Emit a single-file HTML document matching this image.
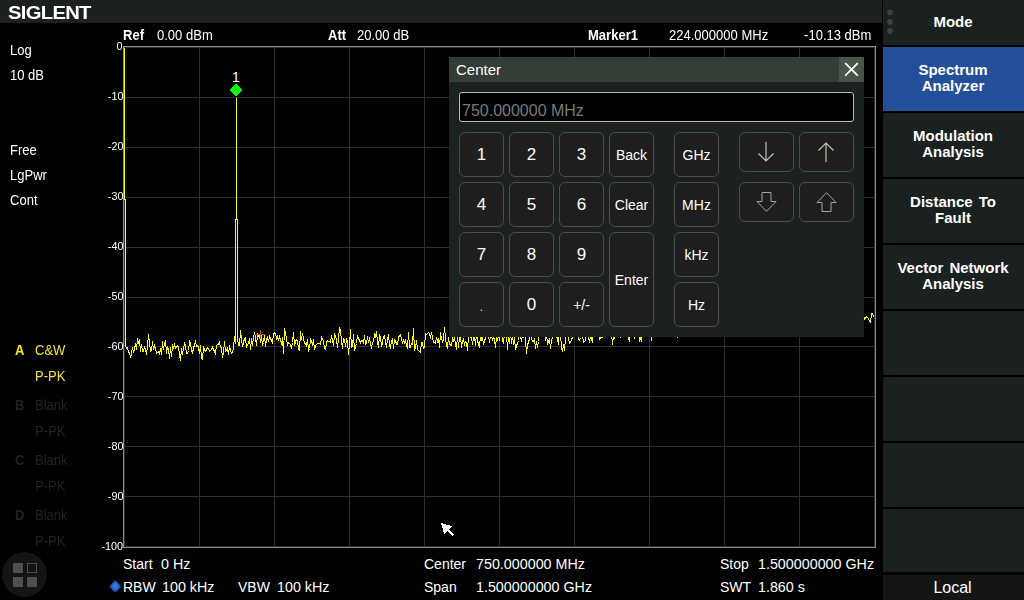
<!DOCTYPE html>
<html><head><meta charset="utf-8"><title>Siglent</title>
<style>
*{box-sizing:border-box;margin:0;padding:0}
html,body{width:1024px;height:600px;background:#000;overflow:hidden}
body{position:relative;font-family:"Liberation Sans",Arial,sans-serif;color:#fff;font-size:13px}
.abs{position:absolute;white-space:nowrap}
.t{position:absolute;white-space:nowrap;line-height:16px;height:16px}
.b{font-weight:bold}
.h{font-size:14px;transform:scaleX(0.93);transform-origin:0 50%}
.hr{transform-origin:100% 50%}
.bt{font-size:14px}
.bv{font-size:14.3px}
#top{left:0;top:0;width:882px;height:23px;background:#1b2121}
#logo{left:8px;top:2px;font-weight:bold;font-size:17.5px;line-height:22px;letter-spacing:-0.6px;transform-origin:0 50%;transform:scaleX(1.155)}
.yl{position:absolute;right:901px;font-size:10px;line-height:12px;height:12px;white-space:nowrap;transform:scaleX(1.08);transform-origin:100% 50%}
.dim{color:#212121}
.yel{color:#f5e32a}
/* right panel */
#rp{left:883px;top:0;width:141px;height:600px}
.mb{position:absolute;left:0;width:141px;height:64px;background:#1b2121;display:flex;align-items:center;justify-content:center;text-align:center;font-weight:bold;font-size:15px;line-height:16px;padding:0 1px 2px 0;word-spacing:2px}
.mb.sel{background:#24509a}
/* dialog */
#dlg{left:449px;top:57px;width:415px;height:280px;background:#1b2121}
#dt{left:0;top:0;width:415px;height:25px;background:#343d36}
#dx{left:390px;top:0;width:25px;height:25px;background:#485448}
#inp{left:10px;top:35px;width:395px;height:30px;background:#000;border:1px solid #bbb;border-radius:3px;color:#7a7a7a;font-size:16px;line-height:36px;padding-left:2px}
.k{position:absolute;width:45px;height:45px;background:#1e1e1e;border:1px solid #4c4c4c;border-radius:6px;display:flex;align-items:center;justify-content:center;font-size:17px;color:#fff}
.k.s{font-size:14px}
.k.a{width:55px;height:40px}
</style></head><body>
<div class="abs" id="top"></div>
<div class="abs" id="logo">SIGLENT</div>

<!-- header -->
<div class="t b h" style="left:123px;top:27px">Ref</div>
<div class="t h" style="left:157px;top:27px">0.00 dBm</div>
<div class="t b h" style="left:328px;top:27px">Att</div>
<div class="t h" style="left:357px;top:27px">20.00 dB</div>
<div class="t b h" style="left:588px;top:27px">Marker1</div>
<div class="t h" style="left:669px;top:27px">224.000000 MHz</div>
<div class="t h hr" style="right:153px;top:27px">-10.13 dBm</div>

<!-- left labels -->
<div class="t h" style="left:10px;top:42px">Log</div>
<div class="t h" style="left:10px;top:67px">10 dB</div>
<div class="t h" style="left:10px;top:142px">Free</div>
<div class="t h" style="left:10px;top:167px">LgPwr</div>
<div class="t h" style="left:10px;top:192px">Cont</div>

<!-- trace legend -->
<div class="t b yel h" style="left:15px;top:342px">A</div>
<div class="t yel h" style="left:35px;top:342px">C&amp;W</div>
<div class="t yel h" style="left:35px;top:368px">P-PK</div>
<div class="t b dim h" style="left:15px;top:397px">B</div>
<div class="t dim h" style="left:35px;top:397px">Blank</div>
<div class="t dim h" style="left:35px;top:423px">P-PK</div>
<div class="t b dim h" style="left:15px;top:452px">C</div>
<div class="t dim h" style="left:35px;top:452px">Blank</div>
<div class="t dim h" style="left:35px;top:478px">P-PK</div>
<div class="t b dim h" style="left:15px;top:507px">D</div>
<div class="t dim h" style="left:35px;top:507px">Blank</div>
<div class="t dim h" style="left:35px;top:533px">P-PK</div>

<!-- y labels -->
<div class="yl" style="top:41px">0</div>
<div class="yl" style="top:91px">-10</div>
<div class="yl" style="top:141px">-20</div>
<div class="yl" style="top:191px">-30</div>
<div class="yl" style="top:241px">-40</div>
<div class="yl" style="top:291px">-50</div>
<div class="yl" style="top:341px">-60</div>
<div class="yl" style="top:391px">-70</div>
<div class="yl" style="top:441px">-80</div>
<div class="yl" style="top:491px">-90</div>
<div class="yl" style="top:541px">-100</div>

<!-- grid + trace -->
<svg class="abs" style="left:0;top:0" width="883" height="600" viewBox="0 0 883 600" shape-rendering="crispEdges">
<g fill="#2e2e2e">
<rect x="124" y="47" width="1" height="500"/>
<rect x="199" y="47" width="1" height="500"/>
<rect x="274" y="47" width="1" height="500"/>
<rect x="349" y="47" width="1" height="500"/>
<rect x="424" y="47" width="1" height="500"/>
<rect x="499" y="47" width="1" height="500"/>
<rect x="574" y="47" width="1" height="500"/>
<rect x="649" y="47" width="1" height="500"/>
<rect x="724" y="47" width="1" height="500"/>
<rect x="799" y="47" width="1" height="500"/>
<rect x="874" y="47" width="1" height="500"/>
<rect x="124" y="47" width="751" height="1"/>
<rect x="124" y="97" width="751" height="1"/>
<rect x="124" y="147" width="751" height="1"/>
<rect x="124" y="197" width="751" height="1"/>
<rect x="124" y="247" width="751" height="1"/>
<rect x="124" y="297" width="751" height="1"/>
<rect x="124" y="346" width="751" height="1"/>
<rect x="124" y="396" width="751" height="1"/>
<rect x="124" y="446" width="751" height="1"/>
<rect x="124" y="496" width="751" height="1"/>
<rect x="124" y="546" width="751" height="1"/>
</g>
<rect x="123.5" y="46.5" width="752" height="501" fill="none" stroke="#8c8c8c" stroke-width="1"/>
<g fill="none" stroke="#ffff00" stroke-width="1" stroke-linejoin="miter"><polyline points="124.5,47.5 124.5,199.5 125.5,199.5 125.5,345.5 126.5,348.5 127.5,347.5 128.5,352.5 129.5,352.5 130.5,357.5 131.5,353.5 132.5,347.5 133.5,352.5 134.5,348.5 135.5,343.5 136.5,349.5 137.5,338.5 138.5,343.5 139.5,339.5 140.5,351.5 141.5,344.5 142.5,351.5 143.5,351.5 144.5,347.5 145.5,349.5 146.5,354.5 147.5,345.5 148.5,334.5 149.5,342.5 150.5,351.5 151.5,350.5 152.5,341.5 153.5,349.5 154.5,345.5 155.5,348.5 156.5,353.5 157.5,352.5 158.5,351.5 159.5,354.5 160.5,348.5 161.5,354.5 162.5,341.5 163.5,349.5 164.5,343.5 165.5,340.5 166.5,353.5 167.5,347.5 168.5,349.5 169.5,358.5 170.5,347.5 171.5,356.5 172.5,345.5 173.5,347.5 174.5,344.5 175.5,348.5 176.5,347.5 177.5,345.5 178.5,346.5 179.5,354.5 180.5,360.5 181.5,348.5 182.5,354.5 183.5,348.5 184.5,343.5 185.5,345.5 186.5,353.5 187.5,353.5 188.5,350.5 189.5,341.5 190.5,343.5 191.5,350.5 192.5,352.5 193.5,348.5 194.5,344.5 195.5,341.5 196.5,346.5 197.5,345.5 198.5,347.5 199.5,353.5 200.5,345.5 201.5,358.5 202.5,359.5 203.5,346.5 204.5,350.5 205.5,351.5 206.5,349.5 207.5,347.5 208.5,348.5 209.5,351.5 210.5,350.5 211.5,349.5 212.5,347.5 213.5,349.5 214.5,351.5 215.5,353.5 216.5,345.5 217.5,344.5 218.5,344.5 219.5,342.5 220.5,347.5 221.5,347.5 222.5,357.5 223.5,352.5 224.5,341.5 225.5,351.5 226.5,350.5 227.5,348.5 228.5,354.5 229.5,345.5 230.5,350.5 231.5,353.5 232.5,352.5 233.5,348.5 234.5,336.5 235.5,343.5 235.5,219.5 236.5,219.5 236.5,97.5 236.500,219.500 237.5,219.5 237.5,338.5 238.5,345.5 239.5,345.5 240.5,330.5 241.5,339.5 242.5,346.5 243.5,342.5 244.5,338.5 245.5,337.5 246.5,347.5 247.5,344.5 248.5,343.5 249.5,338.5 250.5,349.5 251.5,338.5 252.5,345.5 253.5,337.5 254.5,332.5 255.5,337.5 256.5,345.5 257.5,334.5 258.5,336.5 259.5,335.5 260.5,342.5 261.5,335.5 262.5,345.5 263.5,342.5 264.5,334.5 265.5,346.5 266.5,339.5 267.5,337.5 268.5,341.5 269.5,336.5 270.5,338.5 271.5,340.5 272.5,342.5 273.5,334.5 274.5,332.5 275.5,333.5 276.5,338.5 277.5,336.5 278.5,340.5 279.5,336.5 280.5,339.5 281.5,344.5 282.5,337.5 283.5,353.5 284.5,328.5 285.5,333.5 286.5,338.5 287.5,345.5 288.5,342.5 289.5,343.5 290.5,344.5 291.5,348.5 292.5,342.5 293.5,332.5 294.5,345.5 295.5,341.5 296.5,339.5 297.5,340.5 298.5,349.5 299.5,350.5 300.5,331.5 301.5,339.5 302.5,333.5 303.5,338.5 304.5,343.5 305.5,343.5 306.5,345.5 307.5,339.5 308.5,350.5 309.5,348.5 310.5,339.5 311.5,341.5 312.5,344.5 313.5,339.5 314.5,349.5 315.5,345.5 316.5,344.5 317.5,343.5 318.5,343.5 319.5,343.5 320.5,344.5 321.5,337.5 322.5,339.5 323.5,340.5 324.5,348.5 325.5,349.5 326.5,342.5 327.5,340.5 328.5,341.5 329.5,341.5 330.5,342.5 331.5,335.5 332.5,339.5 333.5,345.5 334.5,334.5 335.5,336.5 336.5,339.5 337.5,347.5 338.5,338.5 339.5,327.5 340.5,330.5 341.5,340.5 342.5,348.5 343.5,338.5 344.5,339.5 345.5,346.5 346.5,339.5 347.5,341.5 348.5,354.5 349.5,344.5 350.5,329.5 351.5,347.5 352.5,346.5 353.5,334.5 354.5,350.5 355.5,346.5 356.5,343.5 357.5,335.5 358.5,338.5 359.5,340.5 360.5,342.5 361.5,340.5 362.5,340.5 363.5,342.5 364.5,335.5 365.5,344.5 366.5,343.5 367.5,336.5 368.5,342.5 369.5,337.5 370.5,344.5 371.5,347.5 372.5,342.5 373.5,341.5 374.5,334.5 375.5,336.5 376.5,331.5 377.5,342.5 378.5,347.5 379.5,334.5 380.5,337.5 381.5,346.5 382.5,342.5 383.5,336.5 384.5,335.5 385.5,342.5 386.5,347.5 387.5,339.5 388.5,334.5 389.5,345.5 390.5,347.5 391.5,341.5 392.5,339.5 393.5,348.5 394.5,339.5 395.5,340.5 396.5,344.5 397.5,344.5 398.5,337.5 399.5,335.5 400.5,334.5 401.5,339.5 402.5,342.5 403.5,340.5 404.5,342.5 405.5,340.5 406.5,345.5 407.5,348.5 408.5,332.5 409.5,347.5 410.5,347.5 411.5,343.5 412.5,344.5 413.5,328.5 414.5,350.5 415.5,347.5 416.5,340.5 417.5,349.5 418.5,350.5 419.5,351.5 420.5,352.5 421.5,342.5 422.5,342.5 423.5,348.5 424.5,347.5 425.5,333.5 426.5,334.5 427.5,333.5 428.5,332.5 429.5,333.5 430.5,338.5 431.5,332.5 432.5,337.5 433.5,342.5 434.5,342.5 435.5,343.5 436.5,337.5 437.5,341.5 438.5,338.5 439.5,347.5 440.5,332.5 441.5,338.5 442.5,341.5 443.5,339.5 444.5,327.5 445.5,338.5 446.5,345.5 447.5,347.5 448.5,337.5 449.5,343.5 450.5,345.5 451.5,345.5 452.5,338.5 453.5,340.5 454.5,338.5 455.5,343.5 456.5,349.5 457.5,335.5 458.5,347.5 459.5,336.5 460.5,335.5 461.5,347.5 462.5,341.5 463.5,339.5 464.5,344.5 465.5,341.5 466.5,342.5 467.5,350.5 468.5,336.5 469.5,330.5 470.5,337.5 471.5,336.5 472.5,344.5 473.5,337.5 474.5,336.5 475.5,345.5 476.5,333.5 477.5,340.5 478.5,344.5 479.5,346.5 480.5,335.5 481.5,339.5 482.5,337.5 483.5,344.5 484.5,340.5 485.5,338.5 486.5,331.5 487.5,332.5 488.5,334.5 489.5,342.5 490.5,336.5 491.5,336.5 492.5,339.5 493.5,337.5 494.5,339.5 495.5,347.5 496.5,337.5 497.5,339.5 498.5,336.5 499.5,339.5 500.5,334.5 501.5,332.5 502.5,340.5 503.5,342.5 504.5,334.5 505.5,331.5 506.5,333.5 507.5,349.5 508.5,334.5 509.5,343.5 510.5,332.5 511.5,343.5 512.5,335.5 513.5,344.5 514.5,337.5 515.5,349.5 516.5,345.5 517.5,343.5 518.5,340.5 519.5,332.5 520.5,335.5 521.5,341.5 522.5,334.5 523.5,336.5 524.5,333.5 525.5,339.5 526.5,353.5 527.5,345.5 528.5,341.5 529.5,339.5 530.5,334.5 531.5,338.5 532.5,341.5 533.5,341.5 534.5,339.5 535.5,348.5 536.5,341.5 537.5,347.5 538.5,341.5 539.5,332.5 540.5,335.5 541.5,336.5 542.5,332.5 543.5,331.5 544.5,321.5 545.5,340.5 546.5,334.5 547.5,343.5 548.5,341.5 549.5,339.5 550.5,348.5 551.5,340.5 552.5,337.5 553.5,330.5 554.5,329.5 555.5,329.5 556.5,335.5 557.5,339.5 558.5,344.5 559.5,327.5 560.5,333.5 561.5,347.5 562.5,351.5 563.5,344.5 564.5,350.5 565.5,337.5 566.5,329.5 567.5,334.5 568.5,338.5 569.5,343.5 570.5,342.5 571.5,339.5 572.5,337.5 573.5,325.5 574.5,334.5 575.5,328.5 576.5,330.5 577.5,331.5 578.5,339.5 579.5,340.5 580.5,337.5 581.5,328.5 582.5,334.5 583.5,342.5 584.5,341.5 585.5,340.5 586.5,334.5 587.5,331.5 588.5,336.5 589.5,342.5 590.5,335.5 591.5,338.5 592.5,342.5 593.5,332.5 594.5,333.5 595.5,326.5 596.5,328.5 597.5,323.5 598.5,331.5 599.5,339.5 600.5,338.5 601.5,336.5 602.5,337.5 603.5,327.5 604.5,327.5 605.5,334.5 606.5,323.5 607.5,328.5 608.5,329.5 609.5,331.5 610.5,328.5 611.5,332.5 612.5,344.5 613.5,335.5 614.5,338.5 615.5,331.5 616.5,332.5 617.5,315.5 618.5,333.5 619.5,323.5 620.5,337.5 621.5,331.5 622.5,332.5 623.5,331.5 624.5,326.5 625.5,332.5 626.5,331.5 627.5,328.5 628.5,338.5 629.5,340.5 630.5,327.5 631.5,329.5 632.5,333.5 633.5,332.5 634.5,338.5 635.5,331.5 636.5,327.5 637.5,329.5 638.5,333.5 639.5,340.5 640.5,338.5 641.5,340.5 642.5,330.5 643.5,332.5 644.5,334.5 645.5,332.5 646.5,325.5 647.5,327.5 648.5,331.5 649.5,326.5 650.5,333.5 651.5,340.5 652.5,333.5 653.5,331.5 654.5,323.5 655.5,327.5 656.5,326.5 657.5,332.5 658.5,326.5 659.5,327.5 660.5,327.5 661.5,333.5 662.5,325.5 663.5,324.5 664.5,322.5 665.5,331.5 666.5,324.5 667.5,328.5 668.5,333.5 669.5,322.5 670.5,329.5 671.5,330.5 672.5,327.5 673.5,333.5 674.5,313.5 675.5,327.5 676.5,331.5 677.5,336.5 678.5,334.5 679.5,333.5 680.5,326.5 681.5,329.5 682.5,327.5 683.5,329.5 684.5,330.5 685.5,326.5 686.5,325.5 687.5,323.5 688.5,320.5 689.5,335.5 690.5,333.5 691.5,326.5 692.5,322.5 693.5,330.5 694.5,327.5 695.5,317.5 696.5,320.5 697.5,321.5 698.5,322.5 699.5,328.5 700.5,331.5 701.5,334.5 702.5,326.5 703.5,312.5 704.5,327.5 705.5,327.5 706.5,323.5 707.5,327.5 708.5,330.5 709.5,326.5 710.5,324.5 711.5,319.5 712.5,319.5 713.5,322.5 714.5,322.5 715.5,312.5 716.5,324.5 717.5,325.5 718.5,325.5 719.5,327.5 720.5,322.5 721.5,322.5 722.5,328.5 723.5,318.5 724.5,327.5 725.5,320.5 726.5,328.5 727.5,314.5 728.5,333.5 729.5,323.5 730.5,327.5 731.5,325.5 732.5,328.5 733.5,318.5 734.5,325.5 735.5,327.5 736.5,328.5 737.5,318.5 738.5,330.5 739.5,325.5 740.5,332.5 741.5,327.5 742.5,317.5 743.5,323.5 744.5,313.5 745.5,323.5 746.5,322.5 747.5,327.5 748.5,320.5 749.5,321.5 750.5,319.5 751.5,333.5 752.5,324.5 753.5,333.5 754.5,325.5 755.5,323.5 756.5,329.5 757.5,324.5 758.5,321.5 759.5,318.5 760.5,322.5 761.5,320.5 762.5,324.5 763.5,328.5 764.5,323.5 765.5,314.5 766.5,322.5 767.5,328.5 768.5,323.5 769.5,312.5 770.5,321.5 771.5,326.5 772.5,326.5 773.5,314.5 774.5,324.5 775.5,321.5 776.5,321.5 777.5,312.5 778.5,308.5 779.5,312.5 780.5,324.5 781.5,329.5 782.5,307.5 783.5,326.5 784.5,320.5 785.5,323.5 786.5,319.5 787.5,330.5 788.5,332.5 789.5,315.5 790.5,316.5 791.5,330.5 792.5,317.5 793.5,321.5 794.5,320.5 795.5,324.5 796.5,321.5 797.5,330.5 798.5,331.5 799.5,315.5 800.5,317.5 801.5,316.5 802.5,314.5 803.5,317.5 804.5,319.5 805.5,328.5 806.5,326.5 807.5,320.5 808.5,319.5 809.5,319.5 810.5,326.5 811.5,316.5 812.5,318.5 813.5,318.5 814.5,326.5 815.5,316.5 816.5,317.5 817.5,318.5 818.5,328.5 819.5,329.5 820.5,320.5 821.5,325.5 822.5,334.5 823.5,327.5 824.5,317.5 825.5,318.5 826.5,323.5 827.5,328.5 828.5,326.5 829.5,323.5 830.5,322.5 831.5,328.5 832.5,322.5 833.5,318.5 834.5,321.5 835.5,322.5 836.5,315.5 837.5,321.5 838.5,323.5 839.5,323.5 840.5,326.5 841.5,315.5 842.5,315.5 843.5,311.5 844.5,314.5 845.5,328.5 846.5,315.5 847.5,314.5 848.5,320.5 849.5,316.5 850.5,319.5 851.5,310.5 852.5,314.5 853.5,319.5 854.5,317.5 855.5,316.5 856.5,315.5 857.5,320.5 858.5,327.5 859.5,329.5 860.5,325.5 861.5,317.5 862.5,314.5 863.5,314.5 864.5,319.5 865.5,318.5 866.5,316.5 867.5,317.5 868.5,318.5 869.5,321.5 870.5,322.5 871.5,313.5 872.5,313.5 873.5,316.5 874.5,317.5"/></g>
<path d="M256 334.500h9M260.500 330v9" stroke="#b4501e" stroke-width="1" fill="none"/>
<path d="M236 83.500l6.300 6.500l-6.300 6.500l-6.300-6.500z" fill="#00ff00"/>
</svg>
<div class="t" style="left:226px;top:69px;width:20px;text-align:center;font-size:14px">1</div>

<!-- bottom text -->
<div class="t bt" style="left:123px;top:556px">Start</div>
<div class="t bv" style="left:161px;top:556px">0 Hz</div>
<div class="t bt" style="left:123px;top:579px">RBW</div>
<div class="t bv" style="left:162px;top:579px">100 kHz</div>
<div class="t bt" style="left:238px;top:579px">VBW</div>
<div class="t bv" style="left:277px;top:579px">100 kHz</div>
<div class="t bt" style="left:424px;top:556px">Center</div>
<div class="t bv" style="left:476px;top:556px">750.000000 MHz</div>
<div class="t bt" style="left:424px;top:579px">Span</div>
<div class="t bv" style="left:476px;top:579px">1.500000000 GHz</div>
<div class="t bt" style="left:720px;top:556px">Stop</div>
<div class="t bv" style="left:758px;top:556px">1.500000000 GHz</div>
<div class="t bt" style="left:720px;top:579px">SWT</div>
<div class="t bv" style="left:758px;top:579px">1.860 s</div>
<svg class="abs" style="left:106px;top:577px" width="19" height="19" viewBox="0 0 19 19"><defs><radialGradient id="rg" cx="50%" cy="50%" r="50%"><stop offset="0" stop-color="#3f86f0"/><stop offset="0.550" stop-color="#2a62c8"/><stop offset="1" stop-color="#0e2766"/></radialGradient><filter id="bl" x="-20%" y="-20%" width="140%" height="140%"><feGaussianBlur stdDeviation="0.700"/></filter></defs><path d="M9.300 3l6.200 6.400l-6.200 6.400l-6.200-6.400z" fill="url(#rg)" filter="url(#bl)"/></svg>

<!-- bottom-left icon -->
<svg class="abs" style="left:0;top:550px" width="50" height="50" viewBox="0 0 50 50">
<circle cx="24.500" cy="24.500" r="22.500" fill="#141414"/>
<rect x="13" y="13" width="10" height="10" fill="#4e4e4e"/>
<rect x="27.500" y="13.500" width="9" height="9" fill="none" stroke="#4e4e4e"/>
<rect x="13" y="27" width="10" height="10" fill="#4e4e4e"/>
<rect x="27" y="27" width="10" height="10" fill="#4e4e4e"/>
</svg>

<!-- dialog -->
<div class="abs" id="dlg">
 <div class="abs" id="dt"></div>
 <div class="abs" id="dx"></div>
 <svg class="abs" style="left:390px;top:0" width="25" height="25"><path d="M6.200 6.100l12.600 12.600M18.800 6.100l-12.600 12.600" stroke="#fff" stroke-width="1.700" fill="none"/></svg>
 <div class="abs" style="left:7px;top:4px;font-size:15px;line-height:17px">Center</div>
 <div class="abs" id="inp">750.000000 MHz</div>
 <div class="k" style="left:10px;top:75px">1</div>
 <div class="k" style="left:60px;top:75px">2</div>
 <div class="k" style="left:110px;top:75px">3</div>
 <div class="k s" style="left:160px;top:75px">Back</div>
 <div class="k" style="left:10px;top:125px">4</div>
 <div class="k" style="left:60px;top:125px">5</div>
 <div class="k" style="left:110px;top:125px">6</div>
 <div class="k s" style="left:160px;top:125px">Clear</div>
 <div class="k" style="left:10px;top:175px">7</div>
 <div class="k" style="left:60px;top:175px">8</div>
 <div class="k" style="left:110px;top:175px">9</div>
 <div class="k s" style="left:160px;top:175px;height:95px">Enter</div>
 <div class="k" style="left:10px;top:225px;font-size:12px;padding-top:4px;color:#ddd">.</div>
 <div class="k" style="left:60px;top:225px">0</div>
 <div class="k s" style="left:110px;top:225px">+/-</div>
 <div class="k s" style="left:225px;top:75px">GHz</div>
 <div class="k s" style="left:225px;top:125px">MHz</div>
 <div class="k s" style="left:225px;top:175px">kHz</div>
 <div class="k s" style="left:225px;top:225px">Hz</div>
 <div class="k a" style="left:290px;top:75px"><svg style="position:relative;left:-1px" width="30" height="30" viewBox="0 0 30 30"><path d="M15 5v19M7.500 16.500l7.500 7.500l7.500-7.500" stroke="#c6c6b8" stroke-width="1.150" fill="none"/></svg></div>
 <div class="k a" style="left:350px;top:75px"><svg style="position:relative;left:-1px" width="30" height="30" viewBox="0 0 30 30"><path d="M15 25v-19M7.500 13.500l7.500-7.500l7.500 7.500" stroke="#c6c6b8" stroke-width="1.150" fill="none"/></svg></div>
 <div class="k a" style="left:290px;top:125px"><svg style="position:relative;left:-1px" width="30" height="30" viewBox="0 0 30 30"><path d="M11 5.500H20V14.500H25L15.500 24.300L6 14.500H11Z" stroke="#a4a4a0" stroke-width="1" fill="none"/></svg></div>
 <div class="k a" style="left:350px;top:125px"><svg style="position:relative;left:-1px" width="30" height="30" viewBox="0 0 30 30"><path d="M11 24.500H20V15.500H25L15.500 5.700L6 15.500H11Z" stroke="#a4a4a0" stroke-width="1" fill="none"/></svg></div>
</div>

<!-- right panel -->
<div class="abs" id="rp">
 <div class="mb" style="top:0;height:45px;padding-bottom:1px">Mode</div>
 <svg class="abs" style="left:0;top:0" width="20" height="45"><g fill="#3a4040"><circle cx="7" cy="12.500" r="2.900"/><circle cx="7" cy="22" r="2.900"/><circle cx="7" cy="31" r="2.900"/></g></svg>
 <div class="mb sel" style="top:47px">Spectrum<br>Analyzer</div>
 <div class="mb" style="top:113px">Modulation<br>Analysis</div>
 <div class="mb" style="top:179px">Distance To<br>Fault</div>
 <div class="mb" style="top:245px">Vector Network<br>Analysis</div>
 <div class="mb" style="top:311px"></div>
 <div class="mb" style="top:377px"></div>
 <div class="mb" style="top:443px"></div>
 <div class="mb" style="top:509px;height:63px"></div>
 <div class="mb" style="top:575px;height:25px;font-weight:normal;font-size:16px;background:#151515;padding:1px 2px 0 0;word-spacing:0">Local</div>
</div>

<!-- cursor -->
<svg class="abs" style="left:430px;top:510px" width="40" height="35" viewBox="430 510 40 35" shape-rendering="crispEdges"><path d="M441 523L452.300 526.300L444.300 534.200Z" fill="#fff"/><path d="M447.500 529.500L453.300 535.300" stroke="#fff" stroke-width="2.200" fill="none"/></svg>
</body></html>
